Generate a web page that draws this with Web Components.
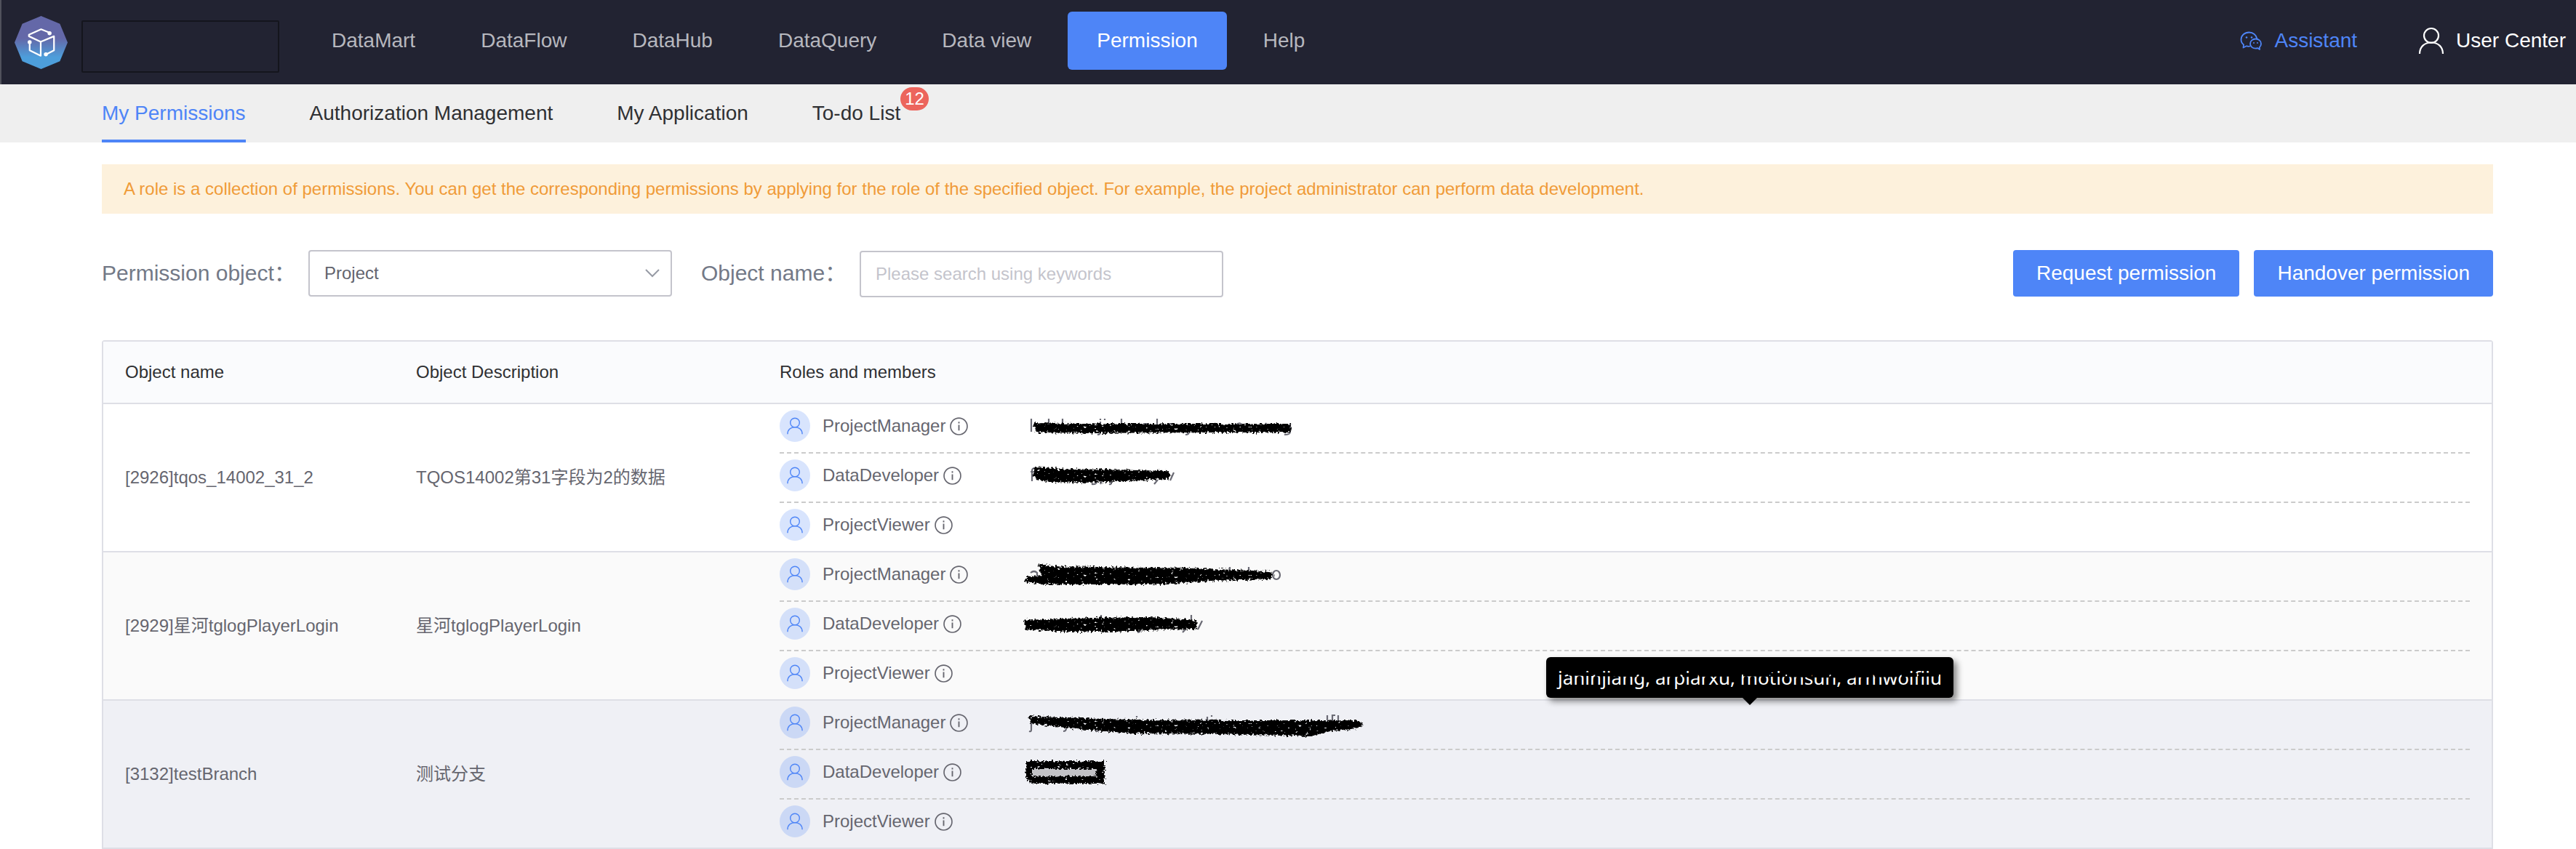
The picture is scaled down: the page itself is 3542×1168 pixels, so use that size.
<!DOCTYPE html>
<html lang="en">
<head>
<meta charset="utf-8">
<title>Permission</title>
<style>
  :root {
    --blue: #4e85f7;
    --ink: #2f3033;
    --text: #66666f;
    --line: #dedfe6;
  }
  body {
    margin: 0;
    background: #fff;
    color: var(--text);
    font: 24px/32px "Liberation Sans", "Noto Sans CJK SC", sans-serif;
  }
</style>
</head>
<body>
<app-page>
  <app-header slot="header">
    <nav-link>DataMart</nav-link>
    <nav-link>DataFlow</nav-link>
    <nav-link>DataHub</nav-link>
    <nav-link>DataQuery</nav-link>
    <nav-link>Data view</nav-link>
    <nav-link active>Permission</nav-link>
    <nav-link>Help</nav-link>
  </app-header>
  <sub-tabs slot="tabs">
    <sub-tab active>My Permissions</sub-tab>
    <sub-tab>Authorization Management</sub-tab>
    <sub-tab>My Application</sub-tab>
    <sub-tab count="12">To-do List</sub-tab>
  </sub-tabs>
  <notice-bar>A role is a collection of permissions. You can get the corresponding permissions by applying for the role of the specified object. For example, the project administrator can perform data development.</notice-bar>
  <filter-bar>
    <ui-button slot="actions">Request permission</ui-button>
    <ui-button slot="actions">Handover permission</ui-button>
  </filter-bar>
  <permission-table></permission-table>
</app-page>

<script>
const define = (name, html, setup) => {
  const tpl = document.createElement('template');
  tpl.innerHTML = html;
  customElements.define(name, class extends HTMLElement {
    connectedCallback() {
      if (this.shadowRoot) return;
      this.attachShadow({ mode: 'open' }).appendChild(tpl.content.cloneNode(true));
      if (setup) setup(this, this.shadowRoot);
    }
  });
};

define('app-page', `
  <style>
    :host { display: flex; flex-direction: column; }
    main { display: flex; flex-direction: column; padding: 30px 114px 0 140px; }
  </style>
  <slot name="header"></slot>
  <slot name="tabs"></slot>
  <main><slot></slot></main>`);

define('user-icon', `
  <style>
    :host { display: block; width: 34px; height: 38px; }
    svg { display: block; width: 100%; height: 100%; overflow: visible; }
  </style>
  <svg viewBox="0 0 34 38" fill="none" stroke="currentColor" stroke-width="2.200">
    <circle cx="17" cy="12" r="10"/>
    <path d="M1 37C1 28 7 21.500 17 21.500S33 28 33 37"/>
  </svg>`);

define('app-header', `
  <style>
    :host { display: flex; align-items: center; height: 116px; box-sizing: border-box; padding: 0 14px 0 18px;
      border-left: 2px solid #50515c; background: #222332; font-size: 28px; }
    .logo { display: block; width: 73px; height: 73px; flex: none; }
    .project { width: 268px; height: 68px; margin: 12px 32px 0 19px; border: 2px solid #14151d; border-radius: 2px; flex: none; }
    nav { display: flex; gap: 10px; margin-bottom: 4px; }
    .right { display: flex; align-items: center; gap: 85px; margin: 0 0 4px auto; }
    a { display: flex; align-items: center; gap: 17px; color: #fff; text-decoration: none; }
    a.assist { color: var(--blue); }
    .chat { width: 30px; height: 28px; display: block; }
  </style>
  <svg class="logo" viewBox="0 0 72 72" aria-hidden="true">
    <defs><linearGradient id="g" x1="0" y1="0" x2="0" y2="1">
      <stop offset="0" stop-color="#6468a8"/><stop offset=".42" stop-color="#6468a8"/>
      <stop offset=".78" stop-color="#4d9edb"/><stop offset="1" stop-color="#4d9edb"/>
    </linearGradient></defs>
    <path fill="url(#g)" d="M36 0L61.500 10.500L72 36L61.500 61.500L36 72L10.500 61.500L0 36L10.500 10.500Z"/>
    <g fill="none" stroke="#fff" stroke-width="2.200" stroke-linejoin="round" stroke-linecap="round">
      <path d="M47 22.500L36 18L19.500 25.500V27.500L35.500 35L53.500 27.500V46.500L43 52"/>
      <path d="M35.500 35V54L20.500 46.500V36"/>
    </g>
    <g fill="#fff"><circle cx="47.500" cy="23.500" r="2.700"/><circle cx="20.500" cy="35.500" r="2.700"/><circle cx="42.500" cy="52" r="2.700"/></g>
  </svg>
  <div class="project"></div>
  <nav><slot></slot></nav>
  <div class="right">
    <a class="assist" href="#">
      <svg class="chat" viewBox="0 0 30 28" fill="none" stroke="currentColor" stroke-width="1.800" stroke-linejoin="round" aria-hidden="true">
        <path d="M14 21.500C12 22 10.500 22 9 21.300L4.500 23.500L5 19.500C2.500 17.500 1.500 15 1.500 12.500C1.500 6.500 6.500 2.500 12.500 2.500C18 2.500 22.500 6 23.500 11.500"/>
        <path d="M21.500 11.500C17.500 11.500 14 14.300 14 18.200S17.500 24.700 21.500 24.700C22.600 24.700 23.500 24.500 24.500 24.200L27 26L26.800 23C28.300 21.700 29 20 29 18.200C29 14.300 25.500 11.500 21.500 11.500Z"/>
        <g fill="currentColor" stroke="none"><circle cx="9" cy="9.500" r="1.300"/><circle cx="16" cy="9.500" r="1.300"/><circle cx="19" cy="17" r="1"/><circle cx="24" cy="17" r="1"/></g>
      </svg>Assistant</a>
    <a href="#"><user-icon></user-icon>User Center</a>
  </div>`);

define('nav-link', `
  <style>
    :host { display: block; }
    a { display: block; padding: 0 40px; border-radius: 6px; line-height: 80px; color: #b6b7be; text-decoration: none; white-space: nowrap; }
    :host([active]) a { background: var(--blue); color: #fff; }
  </style>
  <a href="#"><slot></slot></a>`);

define('sub-tabs', `
  <style>
    :host { display: flex; gap: 88px; height: 80px; padding-left: 140px; background: #efefef; font-size: 28px; }
  </style>
  <slot></slot>`);

define('sub-tab', `
  <style>
    :host { display: block; }
    a { display: block; position: relative; box-sizing: border-box; height: 80px; line-height: 80px; color: var(--ink); text-decoration: none; white-space: nowrap; }
    :host([active]) a { color: var(--blue); border-bottom: 4px solid var(--blue); }
    .badge { position: absolute; left: 100%; top: 4px; padding: 0 6px; border-radius: 16px; background: #ec655d; color: #fff; font-size: 24px; line-height: 32px; }
  </style>
  <a href="#"><slot></slot></a>`, (host, root) => {
    if (!host.hasAttribute('count')) return;
    const badge = document.createElement('span');
    badge.className = 'badge';
    badge.textContent = host.getAttribute('count');
    root.querySelector('a').append(badge);
  });

define('notice-bar', `
  <style>
    :host { display: block; padding: 18px 30px; background: #fdf1dc; color: #f09b38; line-height: 32px; }
  </style>
  <slot></slot>`);

define('ui-button', `
  <style>
    :host { display: block; }
    button { display: block; height: 64px; padding: 0 32px; border: 0; border-radius: 4px; background: var(--blue); color: #fff; font: inherit; font-size: 28px; white-space: nowrap; }
  </style>
  <button type="button"><slot></slot></button>`);

define('filter-bar', `
  <style>
    :host { display: flex; align-items: center; margin: 49px 0 59px; height: 66px; color: #737987; }
    label { font-size: 30px; white-space: nowrap; width: 284px; }
    label.second { width: 218px; margin-left: 40px; }
    .select { display: grid; width: 500px; align-items: center; }
    .select > * { grid-area: 1 / 1; }
    select, input { box-sizing: border-box; width: 500px; height: 64px; margin: 0; padding: 0 20px; border: 2px solid #c4c4cc; border-radius: 4px;
      background: #fff; color: #63646e; font: inherit; appearance: none; outline: 0; }
    input { margin-top: 2px; }
    input::placeholder { color: #c4c4cc; opacity: 1; }
    .select svg { justify-self: end; margin-right: 17px; width: 20px; height: 14px; pointer-events: none; }
    .actions { display: flex; gap: 20px; margin-left: auto; }
  </style>
  <label for="object">Permission object：</label>
  <div class="select">
    <select id="object"><option>Project</option></select>
    <svg viewBox="0 0 20 14" fill="none" stroke="#979ba5" stroke-width="2"><path d="M1 2L10 11L19 2"/></svg>
  </div>
  <label class="second" for="name">Object name：</label>
  <input id="name" type="text" placeholder="Please search using keywords">
  <div class="actions"><slot name="actions"></slot></div>`);

define('role-line', `
  <style>
    :host { display: grid; grid-template-columns: 344px 1fr; height: 66px; border-bottom: 2px dashed #cbcbcb; }
    :host([last]) { border-bottom: 0; }
    .role { display: flex; align-items: center; height: 60px; }
    .avatar { display: grid; place-items: center; width: 42px; height: 44px; border-radius: 50%; background: rgba(78, 133, 247, .22); color: var(--blue); margin-right: 17px; }
    user-icon { width: 22px; height: 24px; }
    .info { width: 25px; height: 25px; margin-left: 6px; }
    .members { position: relative; }
    .members svg { display: block; width: 500px; height: 66px; margin-left: -16px; overflow: visible; }
  </style>
  <div class="role"><span class="avatar"><user-icon></user-icon></span><slot></slot>
    <svg class="info" viewBox="0 0 24 24" fill="none" stroke="currentColor" stroke-width="1.600" aria-hidden="true">
      <circle cx="12" cy="12" r="11"/><path stroke-width="1.800" d="M12 10V17.500M12 6V8.200"/>
    </svg>
  </div>
  <div class="members"><slot name="tip"></slot></div>`, (host, root) => {
    const key = host.getAttribute('mark');
    if (!key) return;
    root.querySelector('.members').insertAdjacentHTML('beforeend', `
      <svg viewBox="0 0 500 66" aria-hidden="true">
        <filter id="rough" x="-5%" y="-40%" width="110%" height="180%">
          <feTurbulence type="fractalNoise" baseFrequency="0.35" numOctaves="2" seed="4" result="n"/>
          <feDisplacementMap in="SourceGraphic" in2="n" scale="8" xChannelSelector="R" yChannelSelector="G" result="d"/>
          <feTurbulence type="fractalNoise" baseFrequency="0.2 0.36" numOctaves="2" seed="9"/>
          <feColorMatrix values="0 0 0 0 0  0 0 0 0 0  0 0 0 0 0  12 0 0 0 -2.6" result="m"/>
          <feComposite in="d" in2="m" operator="in"/>
        </filter>
        ${marks[key]}
      </svg>`);
  });

/* Ink strokes that cover the member lists, with the stems that stick out of them. */
const stem = d => `<path fill="none" stroke="#6a6a74" stroke-width="2.200" d="${d}"/>`;
const ink = d => `<path filter="url(#rough)" d="${d}"/>`;
const marks = {
  a: stem('M18 20V38M42 20V38M61 20V38M113 24V38Q113 42 109 42M113 20V22M119 20V22M142 20V38M191 20V38M33 26L28 40M235 28V38Q235 42 230 42M374 26V38Q374 42 366 42M155 27H162M172 27H180M206 27H214M270 26L276 34M300 28Q306 24 309 30M340 26L346 34')
    + ink('M21 26L80 27L374 27L375 39L240 39L100 40L24 39Z'),
  b: stem('M17 25H24M19 38V24Q19 20 23 20M108 36V39Q107 43 101 42M128 36V40Q128 43 125 42M115 38L113 42M192 36L187 42M214 26L209 37')
    + ink('M23 18L60 21L130 22L204 24L211 30L205 35L150 38L90 40L40 39L24 36L20 28Z'),
  c: stem('M17 28Q22 24 26 28V36M291 20V28M317 20V28M350 31A5 6 0 1 0 360 31A5 6 0 1 0 350 31')
    + ink('M27 15L45 19L180 21L250 22L345 26L351 31L346 37L265 39L200 44L40 44L8 41L12 33L32 32Z'),
  d: stem('M114 22V18M238 18V24M253 26L247 38M96 38V42M168 38Q168 42 164 42M230 38L226 42')
    + ink('M8 25L100 22L180 21L245 25L247 37L200 38L140 41L60 41L10 38Z'),
  e: stem('M18 30V40Q18 43 15 42M36 22V30M66 38Q66 42 62 42M163 21V23M260 22V28M266 20V22M425 20V27M432 28V20H436M440 20V28M106 42Q112 42 112 38')
    + ink('M15 21L57 23L150 26L300 27L466 27L475 33L468 38L430 42L402 49L280 46L157 45L80 39L17 31Z'),
  f: '<path fill="#c2c2c6" d="M18 26H110V38H18Z"/>'
    + '<path filter="url(#rough)" fill-rule="evenodd" d="M10 15H119V46H20L11 39ZM19 26V36H107V26Z"/>'
};

define('name-tip', `
  <style>
    :host { position: absolute; left: 50%; bottom: calc(100% + 4px); transform: translateX(-50%); box-sizing: border-box; height: 56px;
      padding: 0 16px; border-radius: 6px; background: #000; color: #fff; font: 26px/56px "Noto Sans", sans-serif; white-space: nowrap; box-shadow: 5px 5px 8px rgba(0, 0, 0, .45); }
    i { position: absolute; left: 50%; top: 100%; margin-left: -10px; border: 10px solid transparent; border-top-color: #000; border-bottom: 0; }
    svg { position: absolute; left: 0; top: 0; width: 100%; height: 56px; }
  </style>
  <slot></slot><i></i>
  <svg viewBox="0 0 558 56" preserveAspectRatio="none" aria-hidden="true">
    <path fill="none" stroke="#000" stroke-width="5" stroke-dasharray="34 3 21 2" d="M30 23L140 25L280 24L400 26L538 24"/>
  </svg>`);

const rows = [
  { name: '[2926]tqos_14002_31_2', text: 'TQOS14002第31字段为2的数据', marks: ['a', 'b', ''] },
  { name: '[2929]星河tglogPlayerLogin', text: '星河tglogPlayerLogin', marks: ['c', 'd', ''] },
  { name: '[3132]testBranch', text: '测试分支', marks: ['e', 'f', ''], tip: 'janinjiang, arpiarxu, motionsun, armwoifiiu' }
];
const roles = ['ProjectManager', 'DataDeveloper', 'ProjectViewer'];

define('permission-table', `
  <style>
    :host { display: block; }
    table { width: 100%; table-layout: fixed; border-collapse: separate; border-spacing: 0; border: 2px solid var(--line); border-bottom: 0; border-radius: 4px 4px 0 0; }
    col.name { width: 400px; }
    col.text { width: 500px; }
    th, td { padding: 0 30px; border-bottom: 2px solid var(--line); text-align: left; font-weight: normal; }
    th { height: 84px; background: #fafbfd; color: var(--ink); }
    td { background: #fff; }
    tr:nth-child(2) td { background: #fafafa; }
    tr:nth-child(3) td { background: #eff0f5; }
  </style>
  <table>
    <colgroup><col class="name"><col class="text"><col></colgroup>
    <thead><tr><th>Object name</th><th>Object Description</th><th>Roles and members</th></tr></thead>
    <tbody></tbody>
  </table>`, (host, root) => {
    root.querySelector('tbody').innerHTML = rows.map(r => `
      <tr><td>${r.name}</td><td>${r.text}</td><td>${roles.map((role, i) =>
        `<role-line mark="${r.marks[i]}"${i === 2 ? ' last' : ''}>${role}${i === 0 && r.tip ? `<name-tip slot="tip">${r.tip}</name-tip>` : ''}</role-line>`).join('')}</td></tr>`).join('');
  });
</script>
</body>
</html>
